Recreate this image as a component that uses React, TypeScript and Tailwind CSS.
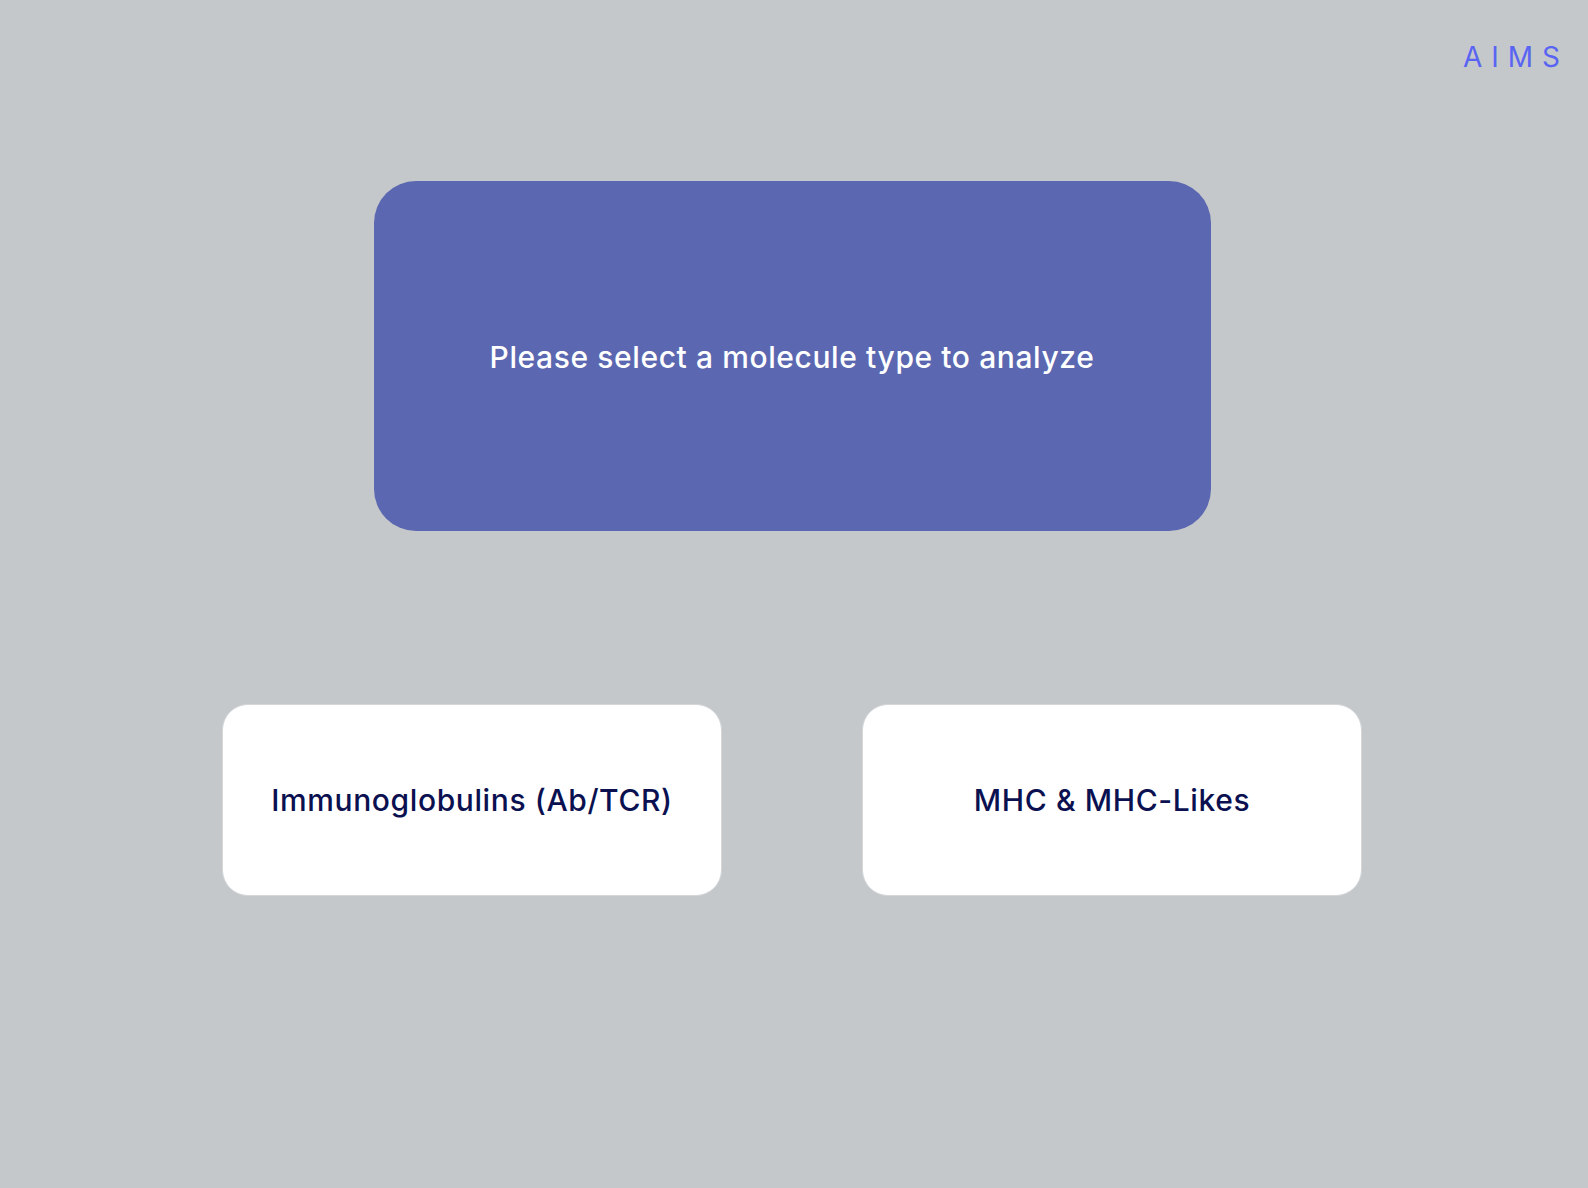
import React from 'react';

const choices = [
  { id: 'ig', label: 'Immunoglobulins (Ab/TCR)' },
  { id: 'mhc', label: 'MHC & MHC-Likes' },
];

export default function App() {
  return (
    <div className="min-h-screen bg-[#c4c8cb] font-['Inter','Noto_Sans',sans-serif]">
      <header className="flex justify-end h-[100px] pt-[37px] pr-[19px]">
        <span className="text-[28px] leading-[40px] tracking-[0.32em] text-[#5a64f2]">AIMS</span>
      </header>

      <main className="flex flex-col items-center pr-[4px]">
        <div className="mt-[81px] w-[837px] h-[350px] rounded-[42px] bg-[#5b67b0] flex items-center justify-center">
          <p className="text-white text-[30px] font-medium tracking-[0.02em] leading-none pt-[2px]">
            Please select a molecule type to analyze
          </p>
        </div>

        <div className="mt-[173px] flex gap-[140px]">
          {choices.map((c) => (
            <button
              key={c.id}
              className="w-[500px] h-[192px] rounded-[26px] bg-white border border-[#d4d6d8] flex items-center justify-center"
            >
              <span className="text-[#0a1050] text-[30px] font-medium tracking-[0.02em] leading-none">{c.label}</span>
            </button>
          ))}
        </div>
      </main>
    </div>
  );
}
